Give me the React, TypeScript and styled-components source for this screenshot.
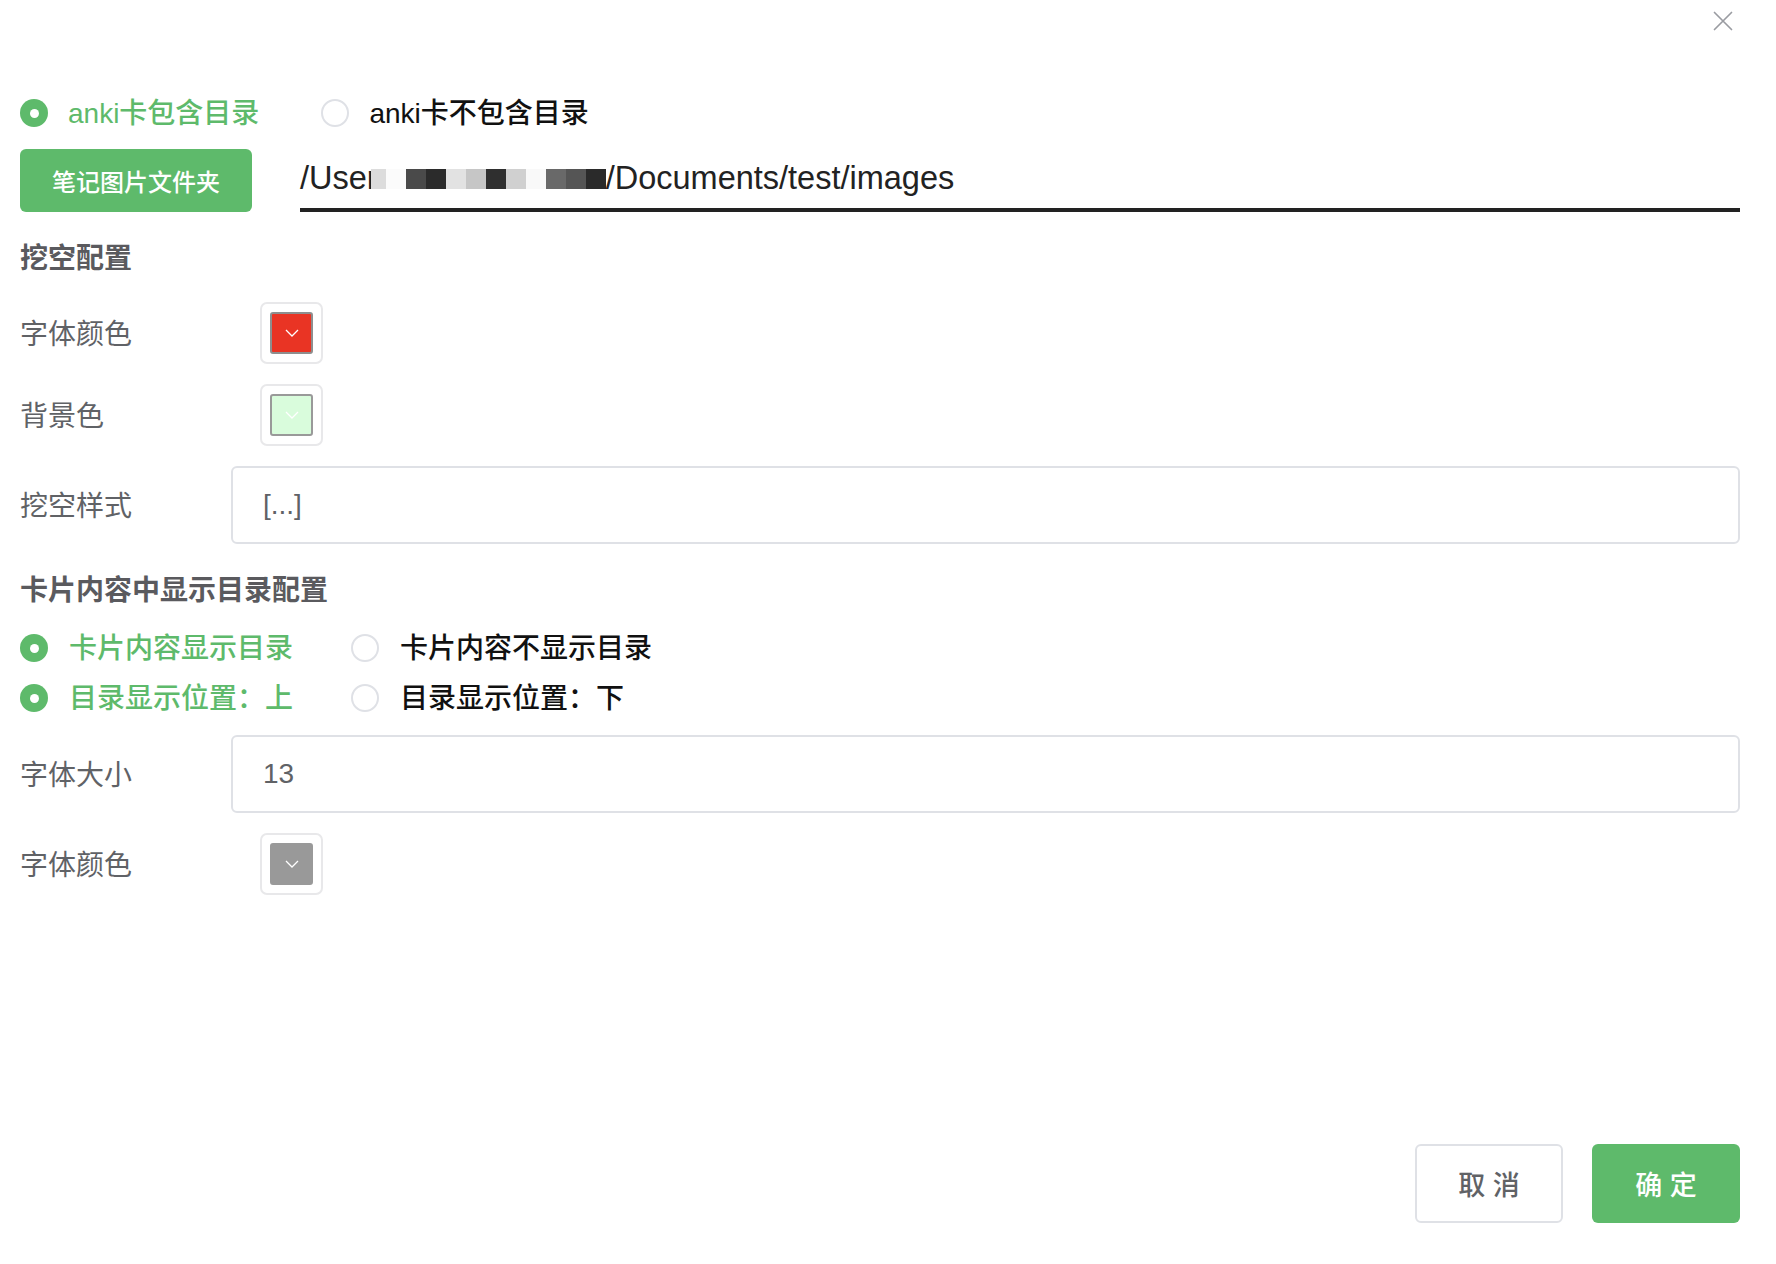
import React from "react";
import styled, { createGlobalStyle } from "styled-components";

const GREEN = "#5eba6b";

const GlobalStyle = createGlobalStyle`
  html, body {
    margin: 0;
    padding: 0;
    background: #ffffff;
  }
  body {
    font-family: "Liberation Sans", "Noto Sans CJK SC", sans-serif;
  }
`;

const Dialog = styled.div`
  box-sizing: border-box;
  width: 100%;
  height: 1264px;
  padding: 0 36px 41px 20px;
  display: flex;
  flex-direction: column;
  background: #fff;
`;

const Header = styled.div`
  box-sizing: border-box;
  height: 41px;
  padding: 11px 7px 0 0;
  display: flex;
  justify-content: flex-end;
  align-items: flex-start;
`;

const CloseButton = styled.button`
  width: 20px;
  height: 20px;
  padding: 0;
  border: 0;
  background: none;
  display: flex;
  cursor: pointer;
`;

const RadioRow = styled.div<{ $top: number }>`
  display: flex;
  align-items: center;
  height: 40px;
  margin-top: ${(p) => p.$top}px;
`;

const RadioItem = styled.label<{ $gap: number; $after: number }>`
  display: flex;
  align-items: center;
  gap: ${(p) => p.$gap}px;
  margin-right: ${(p) => p.$after}px;
  cursor: pointer;
`;

const RadioCircle = styled.span<{ $checked: boolean }>`
  box-sizing: border-box;
  width: 28px;
  height: 28px;
  flex-shrink: 0;
  border-radius: 50%;
  display: flex;
  align-items: center;
  justify-content: center;
  background: ${(p) => (p.$checked ? GREEN : "#fff")};
  border: ${(p) => (p.$checked ? "none" : "2px solid #dfe1e6")};
  &::after {
    content: "";
    width: 9px;
    height: 9px;
    border-radius: 50%;
    background: #fff;
    display: ${(p) => (p.$checked ? "block" : "none")};
  }
`;

const RadioText = styled.span<{ $checked: boolean }>`
  font-size: 28px;
  line-height: 40px;
  padding-top: 2px;
  font-weight: 500;
  white-space: nowrap;
  color: ${(p) => (p.$checked ? GREEN : "#111")};
`;

const PathRow = styled.div`
  display: flex;
  margin-top: 16px;
  height: 63px;
`;

const PrimaryButton = styled.button`
  width: 232px;
  height: 63px;
  flex-shrink: 0;
  border: 0;
  border-radius: 6px;
  background: ${GREEN};
  color: #fff;
  font-family: inherit;
  font-size: 24px;
  font-weight: 500;
  cursor: pointer;
`;

const PathField = styled.div`
  flex: 1;
  margin-left: 48px;
  box-sizing: border-box;
  height: 63px;
  padding-top: 9px;
  border-bottom: 4px solid #222;
  font-size: 32.5px;
  line-height: 40px;
  color: #222;
  white-space: nowrap;
`;

const Mosaic = styled.span`
  display: inline-block;
  margin-left: -7px;
  vertical-align: baseline;
  height: 20px;
  font-size: 0;
  line-height: 0;
`;

const MosaicBlock = styled.span<{ $shade: string; $w: number }>`
  display: inline-block;
  width: ${(p) => p.$w}px;
  height: 20px;
  background: ${(p) => p.$shade};
`;

const SectionTitle = styled.div<{ $top: number }>`
  box-sizing: border-box;
  margin-top: ${(p) => p.$top}px;
  height: 40px;
  padding-top: 4px;
  font-size: 28px;
  line-height: 40px;
  font-weight: 600;
  color: #5a5a5e;
`;

const FormItem = styled.div<{ $top: number; $height: number }>`
  display: flex;
  align-items: center;
  margin-top: ${(p) => p.$top}px;
  height: ${(p) => p.$height}px;
`;

const FormLabel = styled.div`
  width: 211px;
  flex-shrink: 0;
  padding-top: 4px;
  font-size: 28px;
  line-height: 40px;
  color: #606266;
`;

const TextInput = styled.input`
  flex: 1;
  box-sizing: border-box;
  height: 78px;
  border: 2px solid #dfe1e6;
  border-radius: 6px;
  padding: 0 30px;
  font-family: inherit;
  font-size: 28px;
  color: #606266;
  background: #fff;
  outline: none;
`;

const Swatch = styled.div`
  box-sizing: border-box;
  margin-left: 29px;
  width: 63px;
  height: 62px;
  padding: 8px;
  border: 2px solid #e8e8ea;
  border-radius: 7px;
`;

const SwatchColor = styled.div<{ $color: string; $border: string }>`
  box-sizing: border-box;
  width: 100%;
  height: 100%;
  border: 2px solid ${(p) => p.$border};
  border-radius: 3px;
  background: ${(p) => p.$color};
  display: flex;
  align-items: center;
  justify-content: center;
`;

const Footer = styled.div`
  margin-top: auto;
  display: flex;
  justify-content: flex-end;
  gap: 29px;
`;

const FooterButton = styled.button<{ $primary?: boolean }>`
  box-sizing: border-box;
  width: 148px;
  height: 79px;
  border-radius: 6px;
  font-family: inherit;
  font-size: 27px;
  font-weight: 500;
  cursor: pointer;
  border: ${(p) => (p.$primary ? "none" : "2px solid #dfe1e6")};
  background: ${(p) => (p.$primary ? GREEN : "#fff")};
  color: ${(p) => (p.$primary ? "#fff" : "#606266")};
`;

const CloseIcon = () => (
  <svg width="20" height="20" viewBox="0 0 20 20" fill="none">
    <path d="M1.5 1.5L18.5 18.5M18.5 1.5L1.5 18.5" stroke="#9a9ca2" strokeWidth="1.7" strokeLinecap="round" />
  </svg>
);

const Chevron = () => (
  <svg width="14" height="8" viewBox="0 0 14 8" fill="none">
    <path d="M1 1L7 7L13 1" stroke="#fff" strokeWidth="1.3" />
  </svg>
);

type RadioProps = { checked: boolean; label: string; gap?: number; after?: number };

const Radio = ({ checked, label, gap = 20, after = 60 }: RadioProps) => (
  <RadioItem $gap={gap} $after={after}>
    <RadioCircle $checked={checked} />
    <RadioText $checked={checked}>{label}</RadioText>
  </RadioItem>
);

const ColorPicker = ({ color, border }: { color: string; border: string }) => (
  <Swatch>
    <SwatchColor $color={color} $border={border}>
      <Chevron />
    </SwatchColor>
  </Swatch>
);

const mosaic: [string, number][] = [
  ["#dcdcdc", 15],
  ["#fbfbfb", 20],
  ["#4a4a4a", 20],
  ["#2b2b2b", 20],
  ["#e2e2e2", 20],
  ["#c6c6c6", 20],
  ["#2f2f2f", 20],
  ["#d0d0d0", 20],
  ["#f9f9f9", 20],
  ["#696969", 20],
  ["#555555", 20],
  ["#2a2a2a", 20],
];

export default function App() {
  return (
    <>
      <GlobalStyle />
      <Dialog>
        <Header>
          <CloseButton aria-label="close">
            <CloseIcon />
          </CloseButton>
        </Header>

        <RadioRow $top={52}>
          <Radio checked label="anki卡包含目录" after={62} />
          <Radio checked={false} label="anki卡不包含目录" />
        </RadioRow>

        <PathRow>
          <PrimaryButton>笔记图片文件夹</PrimaryButton>
          <PathField>
            /User
            <Mosaic>
              {mosaic.map(([shade, w], i) => (
                <MosaicBlock key={i} $shade={shade} $w={w} />
              ))}
            </Mosaic>
            /Documents/test/images
          </PathField>
        </PathRow>

        <SectionTitle $top={23}>挖空配置</SectionTitle>

        <FormItem $top={27} $height={62}>
          <FormLabel>字体颜色</FormLabel>
          <ColorPicker color="#e93424" border="#8e8e8e" />
        </FormItem>

        <FormItem $top={20} $height={62}>
          <FormLabel>背景色</FormLabel>
          <ColorPicker color="#d9fcdc" border="#999999" />
        </FormItem>

        <FormItem $top={20} $height={78}>
          <FormLabel>挖空样式</FormLabel>
          <TextInput readOnly value="[...]" />
        </FormItem>

        <SectionTitle $top={23}>卡片内容中显示目录配置</SectionTitle>

        <RadioRow $top={21}>
          <Radio checked label="卡片内容显示目录" gap={21} after={58} />
          <Radio checked={false} label="卡片内容不显示目录" gap={21} />
        </RadioRow>

        <RadioRow $top={10}>
          <Radio checked label="目录显示位置：上" gap={21} after={58} />
          <Radio checked={false} label="目录显示位置：下" gap={21} />
        </RadioRow>

        <FormItem $top={17} $height={78}>
          <FormLabel>字体大小</FormLabel>
          <TextInput readOnly value="13" />
        </FormItem>

        <FormItem $top={20} $height={62}>
          <FormLabel>字体颜色</FormLabel>
          <ColorPicker color="#999999" border="#999999" />
        </FormItem>

        <Footer>
          <FooterButton>取 消</FooterButton>
          <FooterButton $primary>确 定</FooterButton>
        </Footer>
      </Dialog>
    </>
  );
}
